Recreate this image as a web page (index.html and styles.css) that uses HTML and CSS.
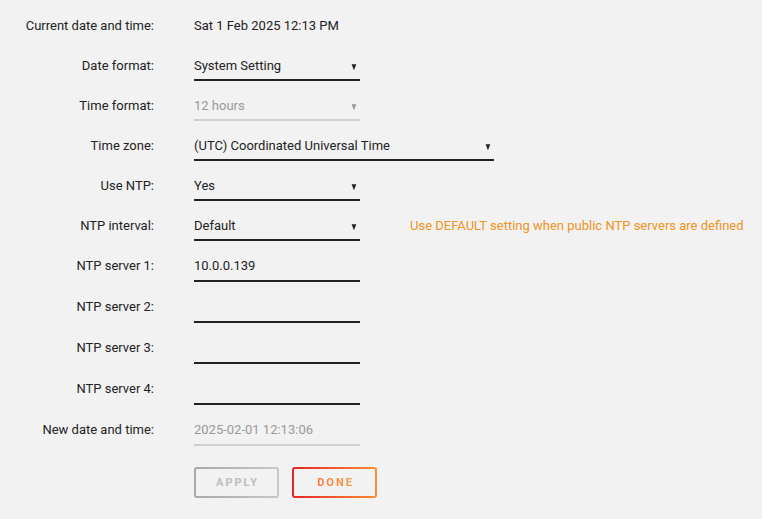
FILE: index.html
```html
<!DOCTYPE html>
<html lang="en">
<head>
  <meta charset="UTF-8" />
  <meta name="viewport" content="width=device-width, initial-scale=1.0"/>
  <title>Date and time</title>
  <link rel="stylesheet" href="styles.css">
</head>
<body>

  <form class="settings">
    <div class="row">
      <label class="label">Current date and time:</label>
      <div class="value">Sat 1 Feb 2025 12:13 PM</div>
    </div>

    <div class="row">
      <label class="label">Date format:</label>
      <div class="select">System Setting<span class="arrow">&#9660;</span></div>
    </div>

    <div class="row">
      <label class="label">Time format:</label>
      <div class="select disabled">12 hours<span class="arrow">&#9660;</span></div>
    </div>

    <div class="row">
      <label class="label">Time zone:</label>
      <div class="select wide">(UTC) Coordinated Universal Time<span class="arrow">&#9660;</span></div>
    </div>

    <div class="row">
      <label class="label">Use NTP:</label>
      <div class="select">Yes<span class="arrow">&#9660;</span></div>
    </div>

    <div class="row">
      <label class="label">NTP interval:</label>
      <div class="select">Default<span class="arrow">&#9660;</span></div>
      <span class="hint">Use DEFAULT setting when public NTP servers are defined</span>
    </div>

    <!-- text inputs -->
    <div class="row tall">
      <label class="label">NTP server 1:</label>
      <div class="input">10.0.0.139</div>
    </div>

    <div class="row tall">
      <label class="label">NTP server 2:</label>
      <div class="input"></div>
    </div>

    <div class="row tall">
      <label class="label">NTP server 3:</label>
      <div class="input"></div>
    </div>

    <div class="row tall">
      <label class="label">NTP server 4:</label>
      <div class="input"></div>
    </div>

    <div class="row tall">
      <label class="label">New date and time:</label>
      <div class="input disabled">2025-02-01 12:13:06</div>
    </div>

    <div class="buttons">
      <button type="button" class="btn btn-apply">APPLY</button>
      <button type="button" class="btn btn-done"><span>DONE</span></button>
    </div>
  </form>

</body>
</html>
```

FILE: styles.css
```css
body {
  margin: 0;
  font-family: Roboto, 'Liberation Sans', sans-serif;
  font-size: 13px;
  background-color: #f2f2f2;
  color: #222;
}

.settings {
  padding-top: 12px;
}

.row {
  display: flex;
  align-items: flex-start;
  height: 40px;
}

.row.tall {
  height: 41px;
}

.label {
  width: 154px;
  margin-right: 40px;
  padding-top: 1px;
  text-align: right;
  line-height: 26px;
  color: #222;
}

.value {
  padding-top: 1px;
  line-height: 26px;
}

.select,
.input {
  display: flex;
  justify-content: space-between;
  align-items: center;
  width: 166px;
  padding-top: 1px;
  line-height: 26px;
  border-bottom: 2px solid #222;
}

.input {
  height: 26px;
  padding-bottom: 1px;
}

.select.wide {
  width: 300px;
}

.arrow {
  font-size: 10px;
  line-height: 10px;
  padding: 2px 0 0 0;
  margin-right: 1px;
  transform: scaleX(0.8);
}

.disabled {
  color: #999;
  border-bottom-color: #cfcfcf;
}

.hint {
  margin-left: 50px;
  padding-top: 1px;
  line-height: 26px;
  color: #ef9321;
}

/* buttons */
.buttons {
  display: flex;
  gap: 13px;
  margin-top: 10px;
  padding-left: 194px;
}

.btn {
  width: 85px;
  height: 31px;
  border: 2px solid transparent;
  border-radius: 3px;
  font-family: Roboto, 'Liberation Sans', sans-serif;
  font-size: 11px;
  font-weight: 700;
  letter-spacing: 2px;
  padding: 0 0 0 2px;
}

.btn-apply {
  color: #bdbdbd;
  background: linear-gradient(#f2f2f2, #f2f2f2) padding-box,
              linear-gradient(to right, #a8a8a8, #c8c8c8) border-box;
}

.btn-done {
  background: linear-gradient(#f2f2f2, #f2f2f2) padding-box,
              linear-gradient(to right, #e4252b, #ff8d2e) border-box;
}

.btn-done span {
  background: linear-gradient(to right, #f7763a, #ff9a3c);
  -webkit-background-clip: text;
  -webkit-text-fill-color: transparent;
}
```
